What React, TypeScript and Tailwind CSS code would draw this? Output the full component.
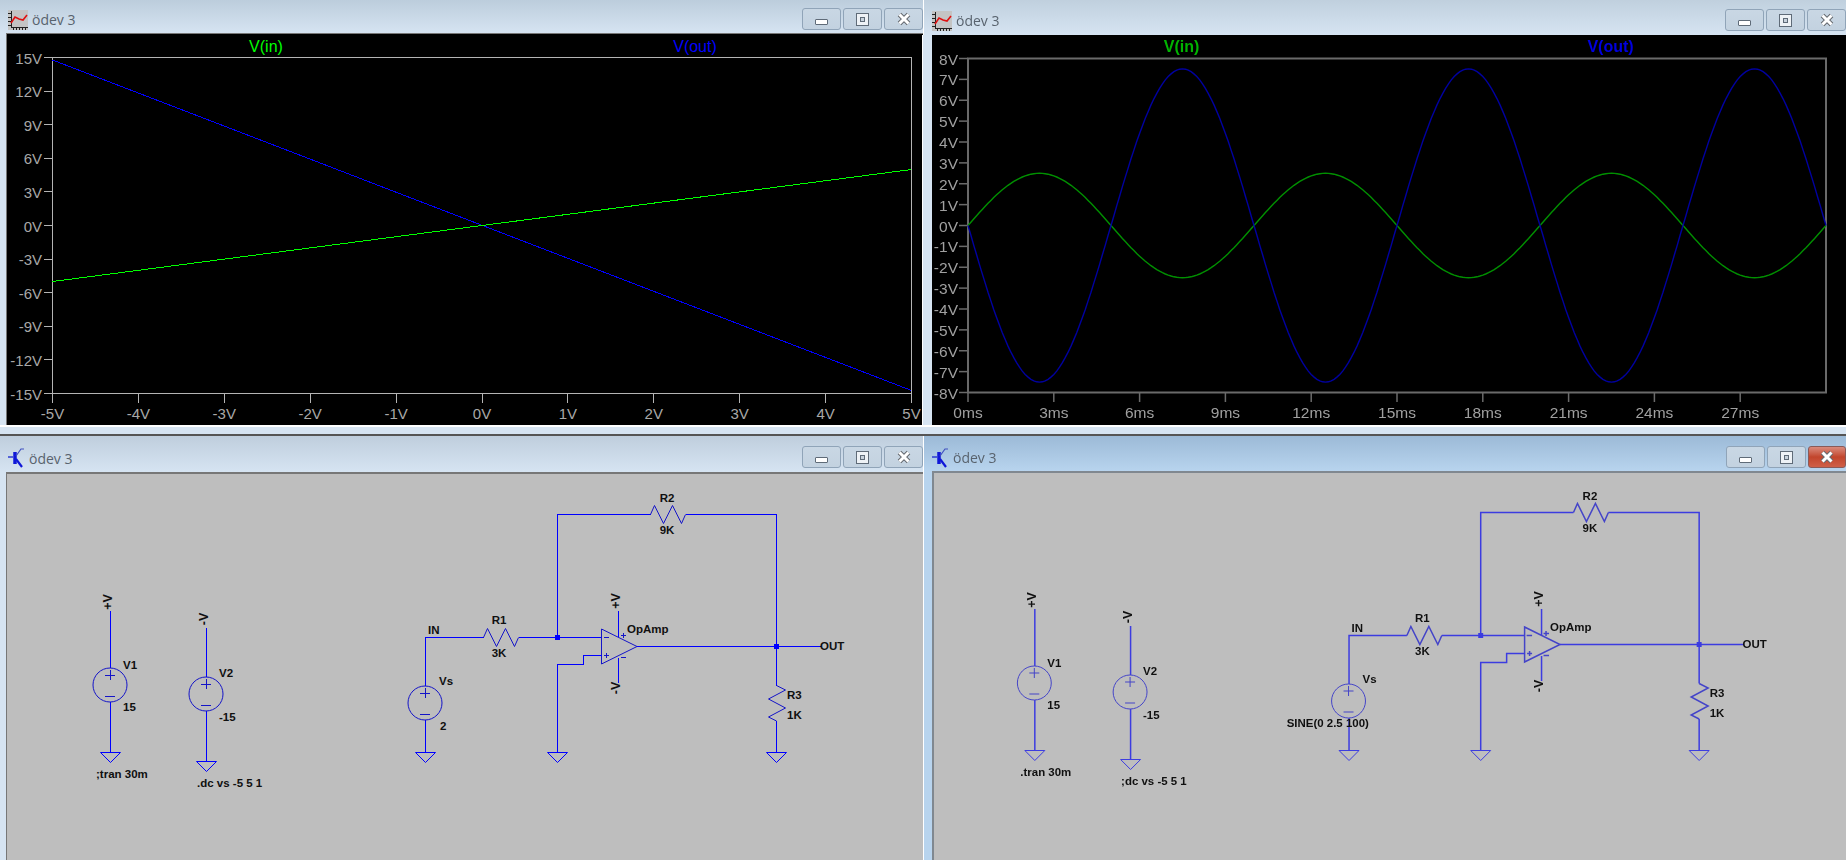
import React from "react";

const sans = "font-['Liberation_Sans',Arial,sans-serif]";

function range(n: number) {
  return Array.from({ length: n }, (_, i) => i);
}

function PlotIcon() {
  return (
    <svg width="20" height="20" viewBox="0 0 20 20" shapeRendering="crispEdges">
      <rect width="20" height="20" fill="#c4c4c4" />
      <path d="M3 1V17H20M0 3H3M0 7H3M0 11H3M0 15H3" stroke="#222" fill="none" />
      <path d="M5 18V20M8 18V20M11 18V20M14 18V20M17 18V20" stroke="#222" fill="none" />
      <path d="M3 13L7 7L11 9L15 10L19 5" stroke="#e01010" strokeWidth="1.6" fill="none" shapeRendering="auto" />
    </svg>
  );
}

function SchematicIcon() {
  return (
    <svg width="17" height="22" viewBox="0 0 17 22">
      <path d="M0 10H5" stroke="#2030d0" strokeWidth="1.4" />
      <path d="M7 5V17" stroke="#1018d8" strokeWidth="3.5" />
      <path d="M8 9L13 2H16" stroke="#4050c0" strokeWidth="1.2" fill="none" />
      <path d="M8 12L14 20" stroke="#1018d8" strokeWidth="2.2" fill="none" />
    </svg>
  );
}

function WinButton({ kind, active }: { kind: "min" | "max" | "close"; active?: boolean }) {
  const red = kind === "close" && active;
  return (
    <div
      className={
        red
          ? "w-[38px] h-[22px] rounded-[3px] border border-[#8a5a58] flex items-center justify-center bg-gradient-to-b from-[#d98a7c] via-[#c2452c] to-[#cf5f48]"
          : "w-[39px] h-[22px] rounded-[3px] border border-[#90a4b8] flex items-center justify-center bg-gradient-to-b from-[#c9d7e4] to-[#c3d2e0]"
      }
    >
      {kind === "min" && <div className="mt-[5px] w-[13px] h-[6px] rounded-[1px] bg-white border border-[#5f6b78]" />}
      {kind === "max" && (
        <div className="w-[13px] h-[13px] bg-[#eef2f6] border border-[#5f6b78] flex items-center justify-center">
          <div className="w-[5px] h-[5px] bg-[#c8d2dc] border border-[#5f6b78]" />
        </div>
      )}
      {kind === "close" && (
        <svg width="14" height="14" viewBox="0 0 14 14">
          <path d="M2.5 2.5L11.5 11.5M11.5 2.5L2.5 11.5" stroke="#666a70" strokeWidth="5" />
          <path d="M2.5 2.5L11.5 11.5M11.5 2.5L2.5 11.5" stroke="#ffffff" strokeWidth="3" />
        </svg>
      )}
    </div>
  );
}

function TitleBar({
  icon,
  className,
  active,
  top,
  drop,
}: {
  icon: React.ReactNode;
  className: string;
  active?: boolean;
  top: string;
  drop: string;
}) {
  return (
    <div className={"flex justify-between shrink-0 " + className}>
      <div className={"flex items-center gap-[4px] pl-[8px] " + drop}>
        {icon}
        <span className="font-['Open_Sans',sans-serif] text-[14px] text-[#59636e]">ödev 3</span>
      </div>
      <div className={"flex gap-[2px] " + top}>
        <WinButton kind="min" />
        <WinButton kind="max" />
        <WinButton kind="close" active={active} />
      </div>
    </div>
  );
}

function FrameBottom() {
  return <div className="flex-1 bg-[#d6e4f2] border-t-2 border-t-white border-b-2 border-b-[#555555]" />;
}

function sine(amp: number) {
  const pts: string[] = [];
  for (let i = 0; i <= 300; i++) {
    const x = 968 + (858 * i) / 300;
    const y = 226.5 - amp * 20.875 * Math.sin((2 * Math.PI * 3 * i) / 300);
    pts.push(x.toFixed(1) + "," + y.toFixed(1));
  }
  return pts.join(" ");
}

function DcPlot() {
  const ys = [15, 12, 9, 6, 3, 0, -3, -6, -9, -12, -15];
  const xs = [-5, -4, -3, -2, -1, 0, 1, 2, 3, 4, 5];
  return (
    <svg className={"block w-[916px] h-[391px] " + sans} viewBox="7 34 916 391">
      <text x="266" y="46" textAnchor="middle" dominantBaseline="central" className="text-[16px] fill-[#00ff00]">V(in)</text>
      <text x="695" y="46" textAnchor="middle" dominantBaseline="central" className="text-[16px] fill-[#0000ff]">V(out)</text>
      <g shapeRendering="crispEdges" stroke="#b4b4b4" fill="none">
        <rect x="52.5" y="57.5" width="859" height="336" />
        {ys.map((v, i) => (
          <path key={v} d={`M44 ${57.5 + i * 33.6}H52`} />
        ))}
        {xs.map((v, i) => (
          <path key={v} d={`M${52.5 + i * 85.9} 394V403`} />
        ))}
      </g>
      {ys.map((v, i) => (
        <text key={v} x="42" y={58 + i * 33.6} textAnchor="end" dominantBaseline="central" className="text-[15px] fill-[#a8a8a8]">
          {v}V
        </text>
      ))}
      {xs.map((v, i) => (
        <text key={v} x={52.5 + i * 85.9} y="413" textAnchor="middle" dominantBaseline="central" className="text-[15px] fill-[#a8a8a8]">
          {v}V
        </text>
      ))}
      <path d="M52.5 60L911.5 390.5" stroke="#0000ff" shapeRendering="crispEdges" />
      <path d="M52.5 281.5L911.5 169.5" stroke="#00ff00" shapeRendering="crispEdges" />
    </svg>
  );
}

function TranPlot() {
  const ys = range(17).map((i) => 8 - i);
  const xs = range(10).map((i) => i * 3);
  return (
    <svg className={"block w-[914px] h-[389px] " + sans} viewBox="932 36 914 389">
      <text x="1181.5" y="47" textAnchor="middle" dominantBaseline="central" className="text-[16px] fill-[#00b400] font-bold">V(in)</text>
      <text x="1610.5" y="47" textAnchor="middle" dominantBaseline="central" className="text-[16px] fill-[#0000e0] font-bold">V(out)</text>
      <g stroke="#6a6a6a" fill="none">
        <rect x="968" y="59.5" width="858" height="334" strokeWidth="2" />
        {ys.map((v, i) => (
          <path key={v} d={`M959 ${59.5 + i * 20.875}H968`} strokeWidth="1.5" />
        ))}
        {xs.map((v, i) => (
          <path key={v} d={`M${968 + i * 85.8} 394V403`} strokeWidth="1.5" />
        ))}
      </g>
      {ys.map((v, i) => (
        <text key={v} x="958" y={60 + i * 20.875} textAnchor="end" dominantBaseline="central" className="text-[15.5px] fill-[#a0a0a0]">
          {v}V
        </text>
      ))}
      {xs.map((v, i) => (
        <text key={v} x={968 + i * 85.8} y="413" textAnchor="middle" dominantBaseline="central" className="text-[15.5px] fill-[#a0a0a0]">
          {v}ms
        </text>
      ))}
      <polyline points={sine(2.5)} fill="none" stroke="#009000" strokeWidth="1.4" />
      <polyline points={sine(-7.5)} fill="none" stroke="#0000a0" strokeWidth="1.4" />
    </svg>
  );
}

function Label({ x, y, children, mid }: { x: number; y: number; children: React.ReactNode; mid?: boolean }) {
  return (
    <text
      x={x}
      y={y}
      textAnchor={mid ? "middle" : "start"}
      dominantBaseline="central"
      className="text-[11.5px] font-bold fill-[#101010]"
    >
      {children}
    </text>
  );
}

function Rail({ x, y, children }: { x: number; y: number; children: React.ReactNode }) {
  return (
    <text
      transform={`rotate(-90 ${x} ${y})`}
      x={x}
      y={y}
      textAnchor="middle"
      dominantBaseline="central"
      className="text-[12.5px] font-bold fill-[#101010]"
    >
      {children}
    </text>
  );
}

function Ground({ x, y, c }: { x: number; y: number; c: string }) {
  return (
    <path d={`M${x - 10} ${y + 0.5}H${x + 10}L${x} ${y + 10.5}Z`} fill="none" stroke={c} strokeWidth="1" shapeRendering="geometricPrecision" />
  );
}

function Source({ x, y, c }: { x: number; y: number; c: string }) {
  return (
    <g stroke={c} fill="none" strokeWidth="1">
      <circle cx={x} cy={y} r="17" shapeRendering="geometricPrecision" />
      <path d={`M${x - 5} ${y - 10}H${x + 5}M${x} ${y - 15}V${y - 5}M${x - 5} ${y + 11}H${x + 5}`} />
    </g>
  );
}

function Schematic({ sim }: { sim: boolean }) {
  const wire = sim ? "#3c3ce0" : "#0000ff";
  const thin = sim ? "#4444c8" : "#1414c8";
  const w = sim ? 1.5 : 1;
  return (
    <g fill="none" stroke={wire} strokeWidth={w}>
      {/* supplies */}
      <path d="M110.5 611V668M110.5 702V752" />
      <path d="M206.5 628V677M206.5 711V761" />
      <Source x={110} y={685} c={thin} />
      <Source x={206} y={694} c={thin} />
      <Ground x={110.5} y={752} c={wire} />
      <Ground x={206.5} y={761} c={wire} />

      {/* input */}
      <path d="M425.5 686V637.5H483.5" />
      <path d="M425.5 720V752" />
      <Source x={425} y={703} c={thin} />
      <Ground x={425.5} y={752} c={wire} />
      <polyline
        points="483.5,637.5 487.5,628.5 496.5,646.5 505.5,628.5 514.5,646.5 518.5,637.5"
        stroke={thin}
        shapeRendering="geometricPrecision"
      />

      {/* feedback */}
      <path d="M518.5 637.5H601.5M557.5 637.5V514.5H650.5" />
      <polyline
        points="650.5,514.5 654.5,505.5 663.5,523.5 672.5,505.5 681.5,523.5 685.5,514.5"
        stroke={thin}
        shapeRendering="geometricPrecision"
      />
      <path d="M685.5 514.5H776.5V685.5" />

      {/* op amp */}
      <path d="M601.5 629L637 646.5L601.5 664Z" stroke={thin} shapeRendering="geometricPrecision" />
      <path d="M601.5 655.5H583.5V664.5H557.5V752" />
      <Ground x={557.5} y={752} c={wire} />
      <path d="M618.5 611V637M618.5 658V683" />
      <path d="M603.5 637.5H609M604 655.5H609M606.5 653V658M620.5 635.5H626M623 633V638M620.5 657.5H626" stroke={thin} />

      {/* output */}
      <path d="M637 646.5H821" />
      <rect x="555" y="635" width="5" height="5" fill={wire} stroke="none" />
      <rect x="774" y="644" width="5" height="5" fill={wire} stroke="none" />
      <polyline
        points="776.5,685.5 785.5,690 768.5,699 785.5,708 768.5,717 776.5,721"
        stroke={thin}
        shapeRendering="geometricPrecision"
      />
      <path d="M776.5 721V752" />
      <Ground x={776.5} y={752} c={wire} />

      <g stroke="none">
        <Rail x={108} y={602}>+V</Rail>
        <Rail x={204} y={619}>-V</Rail>
        <Rail x={616} y={601}>+V</Rail>
        <Rail x={616} y={688}>-V</Rail>
        <Label x={123} y={665}>V1</Label>
        <Label x={123} y={707}>15</Label>
        <Label x={219} y={673}>V2</Label>
        <Label x={219} y={717}>-15</Label>
        <Label x={96} y={774}>{sim ? ".tran 30m" : ";tran 30m"}</Label>
        <Label x={197} y={783}>{sim ? ";dc vs -5 5 1" : ".dc vs -5 5 1"}</Label>
        <Label x={428} y={630}>IN</Label>
        <Label x={439} y={681}>Vs</Label>
        {sim ? (
          <text x="363" y="725" dominantBaseline="central" className="text-[11.5px] font-bold fill-[#101010]">
            SINE(0 2.5 100)
          </text>
        ) : (
          <Label x={440} y={726}>2</Label>
        )}
        <Label x={499} y={620} mid>R1</Label>
        <Label x={499} y={653} mid>3K</Label>
        <Label x={667} y={498} mid>R2</Label>
        <Label x={667} y={530} mid>9K</Label>
        <Label x={627} y={629}>OpAmp</Label>
        <Label x={820} y={646}>OUT</Label>
        <Label x={787} y={695}>R3</Label>
        <Label x={787} y={715}>1K</Label>
      </g>
    </g>
  );
}

export default function App() {
  return (
    <div className="w-[1846px] h-[860px] overflow-hidden grid grid-cols-[923px_923px] grid-rows-[436px_424px] bg-[#d6e4f2]">
      {/* plot, dc sweep */}
      <div className="flex flex-col min-h-0">
        <TitleBar
          icon={<PlotIcon />}
          top="mt-[8px]"
          drop="pt-[6px]"
          className="h-[33px] bg-gradient-to-b from-[#bccddc] to-[#d6e4f2]"
        />
        <div className="h-[392px] pl-[6px] bg-[#d6e4f2]">
          <div className="border-l border-t border-[#777777] bg-black h-full">
            <DcPlot />
          </div>
        </div>
        <FrameBottom />
      </div>

      {/* plot, transient */}
      <div className="flex flex-col min-h-0 blur-[0.5px]">
        <TitleBar
          icon={<PlotIcon />}
          top="mt-[9px]"
          drop="pt-[6px]"
          className="h-[35px] bg-gradient-to-b from-[#c0d0de] to-[#d6e4f2] border-l border-l-white"
        />
        <div className="h-[390px] pl-[9px] bg-[#d6e4f2] border-l border-l-white -ml-px">
          <div className="bg-black h-full">
            <TranPlot />
          </div>
        </div>
        <FrameBottom />
      </div>

      {/* schematic, dc sweep */}
      <div className="flex flex-col min-h-0">
        <TitleBar
          icon={<SchematicIcon />}
          top="mt-[10px]"
          drop="pt-[8px]"
          className="h-[36px] bg-gradient-to-b from-[#bfcedd] to-[#d6e4f2]"
        />
        <div className="flex-1 pl-[6px] bg-[#d6e4f2]">
          <div className="border-l border-t-2 border-[#777777] bg-[#bebebe] h-full">
            <svg className={"block w-[916px] h-[386px] " + sans} viewBox="7 474 916 386" shapeRendering="crispEdges">
              <Schematic sim={false} />
            </svg>
          </div>
        </div>
      </div>

      {/* schematic, transient */}
      <div className="flex flex-col min-h-0 blur-[0.5px]">
        <TitleBar
          icon={<SchematicIcon />}
          active
          top="mt-[10px]"
          drop="pt-[8px]"
          className="h-[35px] bg-gradient-to-b from-[#9cbad7] to-[#b8d4ee] border-l border-l-white"
        />
        <div className="flex-1 pl-[8px] bg-[#b8d4ee] border-l border-l-white">
          <div className="border-l-2 border-t-2 border-[#808890] bg-[#bebebe] h-full">
            <svg className={"block w-[912px] h-[387px] " + sans} viewBox="934 473 912 387">
              <g transform="translate(924.6 -2) scale(0.9975 1)">
                <Schematic sim />
              </g>
            </svg>
          </div>
        </div>
      </div>
    </div>
  );
}
